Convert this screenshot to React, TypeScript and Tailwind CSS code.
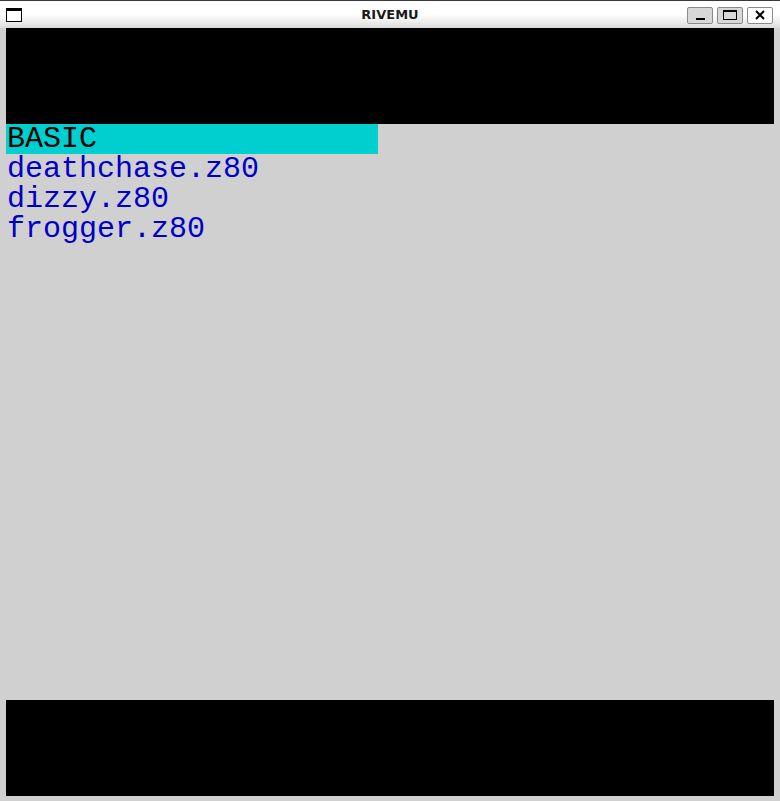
import React from "react";

const files = ["deathchase.z80", "dizzy.z80", "frogger.z80"];

const TitleBar = () => {
  return (
    <div className="h-[28px] border-t border-[#3a3a3a] bg-gradient-to-b from-white via-white to-[#dcdcdc] flex items-center relative">
      {/* window icon */}
      <div className="ml-[6px] mt-[1px] w-[16px] h-[14px] border border-black border-t-[3px] bg-white"></div>

      <div className="absolute left-0 right-0 top-0 h-[27px] flex items-center justify-center pointer-events-none">
        <span className="font-['DejaVu_Sans',sans-serif] font-bold text-[13px] text-[#1a1a1a]">
          RIVEMU
        </span>
      </div>

      <div className="ml-auto mr-[7px] flex gap-[4px] mt-[1px]">
        <button className="w-[26px] h-[17px] bg-[#d8d8d8] border border-[#8a8a8a] rounded-[2px] flex items-end justify-center pb-[3px]">
          <div className="w-[9px] h-[2px] bg-black"></div>
        </button>
        <button className="w-[26px] h-[17px] bg-[#d8d8d8] border border-[#8a8a8a] rounded-[2px] flex items-center justify-center">
          <div className="w-[14px] h-[10px] border border-black border-t-2"></div>
        </button>
        <button className="w-[26px] h-[17px] bg-white border border-[#8a8a8a] rounded-[2px] flex items-center justify-center">
          <svg width="10" height="10" viewBox="0 0 10 10">
            <path d="M1 1 L9 9 M9 1 L1 9" stroke="black" strokeWidth="2" />
          </svg>
        </button>
      </div>
    </div>
  );
};

export default function App() {
  return (
    <div className="w-[780px] h-[801px] bg-[#d0d0d0] overflow-hidden">
      <TitleBar />

      <div className="px-[6px]">
        {/* top border of the emulated screen */}
        <div className="h-[96px] bg-black"></div>

        {/* file list */}
        <div className="h-[576px] bg-[#d0d0d0] font-['Liberation_Mono',monospace] text-[30px] leading-[30px]">
          <div className="w-[372px] h-[30px] bg-[#00cfcf] text-black pl-[1px]">BASIC</div>
          {files.map((f) => (
            <div key={f} className="h-[30px] text-[#0000c8] pl-[1px]">
              {f}
            </div>
          ))}
        </div>

        {/* bottom border */}
        <div className="h-[96px] bg-black"></div>
      </div>
    </div>
  );
}
